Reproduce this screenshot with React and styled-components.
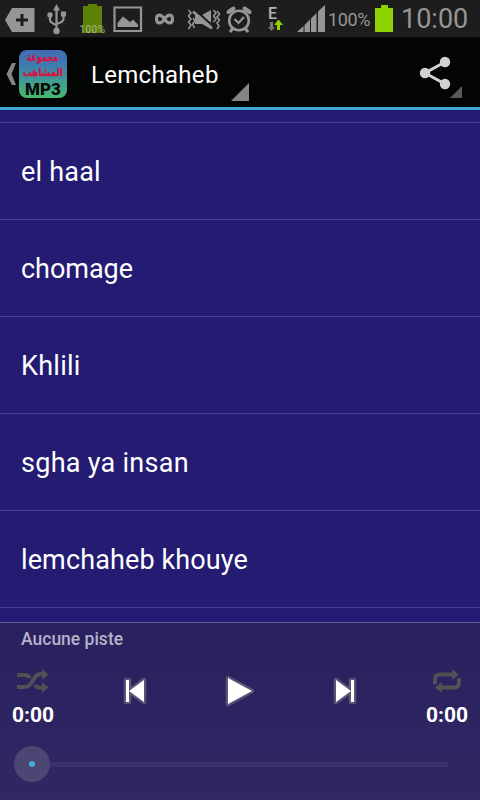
import React from "react";
import styled, { createGlobalStyle } from "styled-components";

const GlobalStyle = createGlobalStyle`
  * { box-sizing: border-box; }
  html, body { margin: 0; padding: 0; background: #241b72; }
  body { font-family: Roboto, "Noto Sans", sans-serif; color: #fff; overflow: hidden; }
  svg { display: block; flex: none; }
`;

const Screen = styled.div`
  width: 480px;
  height: 800px;
  display: flex;
  flex-direction: column;
  overflow: hidden;
  background: #241b72;
`;

const StatusBar = styled.header`
  height: 38px;
  flex: none;
  display: flex;
  align-items: stretch;
  padding-left: 4px;
  background: #1d1d1d;
  border-bottom: 1px solid #0c0c0c;
`;

const StatusGlyph = styled.svg`
  width: ${(p) => p.$w}px;
  height: 37px;
  margin-right: ${(p) => p.$gap || 0}px;
  fill: #969696;
`;

const StatusText = styled.span`
  width: ${(p) => p.$w}px;
  margin-right: ${(p) => p.$gap || 0}px;
  font-size: ${(p) => p.$size}px;
  font-weight: 400;
  letter-spacing: ${(p) => p.$track || 0}px;
  line-height: ${(p) => p.$line}px;
  color: #969696;
  white-space: nowrap;
`;

const ActionBar = styled.nav`
  height: 72px;
  flex: none;
  display: flex;
  align-items: flex-start;
  padding: 12px 0 0 6px;
  background: #030504;
  border-bottom: 3px solid #3fa9d8;
`;

const BackArrow = styled.svg`
  width: 13px;
  height: 48px;
`;

const AppIcon = styled.div`
  width: 48px;
  height: 48px;
  border-radius: 8px;
  display: flex;
  flex-direction: column;
  align-items: center;
  background: linear-gradient(#426bb4 0%, #3f79b0 30%, #419b92 65%, #46b970 100%);
`;

const IconScript = styled.span`
  height: 15px;
  font: 700 11px/15px "DejaVu Sans", sans-serif;
  color: #d5123e;
  -webkit-text-stroke: 0.3px #d5123e;
  white-space: nowrap;
  transform: scaleX(${(p) => p.$sx});
`;

const IconLatin = styled.span`
  font: 900 17px/18px Roboto, sans-serif;
  color: #060b06;
`;

const Title = styled.h1`
  width: 140px;
  margin: 0 0 0 24px;
  font-size: 24px;
  font-weight: 400;
  line-height: 50px;
  letter-spacing: 0.3px;
`;

const Corner = styled.svg`
  width: ${(p) => p.$size}px;
  height: ${(p) => p.$size}px;
  margin-top: ${(p) => p.$top}px;
  fill: ${(p) => p.$color};
`;

const ShareIcon = styled.svg`
  width: 31px;
  height: 48px;
  margin-left: 170px;
`;

const TrackList = styled.ul`
  flex: 1;
  min-height: 0;
  margin: 0;
  padding: 12px 0 0;
  overflow: hidden;
  list-style: none;
`;

const Track = styled.li`
  height: 97px;
  padding-left: 21px;
  border-top: 1px solid #453c8b;
  font-size: 27px;
  line-height: 98px;
`;

const TrackName = styled.span`
  letter-spacing: ${(p) => p.$track}px;
`;

const Player = styled.footer`
  height: 178px;
  flex: none;
  border-top: 1px solid #67619c;
  background: linear-gradient(#29205f, #302863);
`;

const NowPlaying = styled.div`
  height: 32px;
  padding-left: 21px;
  font-size: 17.5px;
  font-weight: 500;
  line-height: 32px;
  color: #b5b2c9;
`;

const Controls = styled.div`
  height: 84px;
  display: flex;
  justify-content: space-between;
  padding: 0 12px;
`;

const ModeColumn = styled.div`
  width: 42px;
  display: flex;
  flex-direction: column;
  align-items: center;
  padding-top: 12px;
`;

const ModeIcon = styled.svg`
  width: 34px;
  height: 28px;
  fill: none;
  stroke: #545052;
  stroke-width: 4;
`;

const Time = styled.span`
  margin-top: 7px;
  font-size: 21px;
  font-weight: 700;
  line-height: 26px;
`;

const Transport = styled.div`
  display: flex;
  align-items: flex-start;
  gap: 71px;
  padding-top: 18px;
`;

const TransportIcon = styled.svg`
  width: 34px;
  height: 36px;
  fill: #fff;
  stroke: #5a5478;
  stroke-width: 4.5;
  stroke-linejoin: round;
  paint-order: stroke;
`;

const Seek = styled.div`
  height: 50px;
  display: flex;
  align-items: center;
  padding: 0 32px 0 14px;
`;

const Thumb = styled.div`
  width: 36px;
  height: 36px;
  flex: none;
  display: grid;
  place-items: center;
  border-radius: 50%;
  background: #4d4673;
`;

const ThumbDot = styled.div`
  width: 6px;
  height: 6px;
  border-radius: 50%;
  background: #42ace0;
`;

const Rail = styled.div`
  flex: 1;
  height: 5px;
  background: #3b336e;
`;

const tracks = [
  ["el haal", 0.2],
  ["chomage", -0.05],
  ["Khlili", 0.25],
  ["sgha ya insan", 0.27],
  ["lemchaheb khouye", 0.12],
  ["", 0],
];

function StatusIcons() {
  return (
    <StatusBar>
      <StatusGlyph $w={31} $gap={11} viewBox="4 0 31 37">
        <path d="M5 20 12 8H34.500V32H12Z" />
        <path d="M16 20H28M22 14V26" stroke="#1d1d1d" strokeWidth="3" />
      </StatusGlyph>
      <StatusGlyph $w={22} $gap={11} viewBox="46 0 22 37">
        <path d="M56.500 4 60 10.500H53Z" />
        <circle cx="56.500" cy="31" r="3.200" />
        <circle cx="50" cy="15" r="2.700" />
        <path d="M61 11.500h5v5h-5z" />
        <path d="M56.500 8V31M50 15V19.500Q50 23 56.500 25M63.500 14V19Q63.500 22 56.500 24" fill="none" stroke="#969696" strokeWidth="2.200" />
      </StatusGlyph>
      <StatusGlyph $w={29} $gap={5} viewBox="79 0 29 37">
        <path d="M83 6H88V4H97V6H102V33H83Z" fill="#5b8204" />
        <text x="79.500" y="32.500" fontSize="10" fontFamily="Roboto" textLength="25.500" fill="#a7b590">100%</text>
      </StatusGlyph>
      <StatusGlyph $w={30} $gap={11} viewBox="113 0 30 37">
        <path d="M114.500 7.500H141V31H114.500Z" fill="none" stroke="#969696" strokeWidth="2.200" />
        <path d="M117.500 27V23L123 16.500 130 22 133 19.500 138 24.500V27Z" />
      </StatusGlyph>
      <StatusGlyph $w={22} $gap={10} viewBox="154 0 22 37">
        <path d="M164.500 19C161 13.500 156.500 14 156.500 19S161 24.500 164.500 19S172.500 14 172.500 19S168 24.500 164.500 19Z" fill="none" stroke="#969696" strokeWidth="3.200" />
      </StatusGlyph>
      <StatusGlyph $w={35} $gap={4} viewBox="186 0 35 37">
        <path d="M195 15H202L211 10V29L202 24H195Z" />
        <path d="M194.500 9.500 213.500 26.500" stroke="#1d1d1d" strokeWidth="2.200" />
        <path d="M193 11.500 212 28.500" stroke="#969696" strokeWidth="2.600" />
        <path d="M188.500 10 191 13 188.500 16 191 19 188.500 22 191 25 188.500 29M193 18 195 21 192.500 24 194.500 28M213.500 10 216 13 213.500 16 216 19 213.500 22M217 11 219.500 14 217 17 219.500 20 217 23 219 26 217 29" fill="none" stroke="#969696" strokeWidth="1.600" />
      </StatusGlyph>
      <StatusGlyph $w={28} $gap={14} viewBox="225 0 28 37">
        <g fill="none" stroke="#969696">
          <circle cx="239" cy="20.500" r="9.800" strokeWidth="2.600" />
          <path d="M234.500 19 238.500 23 244 17" strokeWidth="2.200" />
          <path d="M228.500 12 233.500 8.500M244.500 8.500 249.500 12" strokeWidth="4" strokeLinecap="round" />
          <path d="M233 28 230 32M245 28 248 32" strokeWidth="3" />
        </g>
      </StatusGlyph>
      <StatusGlyph $w={17} $gap={12} viewBox="267 0 17 37">
        <text x="268" y="18.500" fontSize="16" fontWeight="500" fontFamily="Roboto" fill="#b2b2b2">E</text>
        <path d="M270 22H273V27H275L271.500 31 268 27H270Z" fill="#777" />
        <path d="M277 30V25H274L278.500 19.500 283 25H280V30Z" fill="#94d000" />
      </StatusGlyph>
      <StatusGlyph $w={30} $gap={2} viewBox="296 0 30 37">
        <path d="M297 32 303.500 26V32ZM304.500 25 310 19.500V32H304.500ZM311 18.500 316.500 13V32H311ZM318 11.500 325 5V32H318Z" />
      </StatusGlyph>
      <StatusText $w={43} $gap={4} $size={18} $track={-0.35} $line={40}>100%</StatusText>
      <StatusGlyph $w={19} $gap={7} viewBox="375 0 19 37">
        <path d="M375 8H381V5H388V8H393V32H375Z" fill="#91d300" />
      </StatusGlyph>
      <StatusText $w={70} $size={27} $line={38}>10:00</StatusText>
    </StatusBar>
  );
}

export default function App() {
  return (
    <>
      <GlobalStyle />
      <Screen>
        <StatusIcons />
        <ActionBar>
          <BackArrow viewBox="0 0 13 48">
            <path d="M6 13H10L5.500 24 10 35H6L0.500 24Z" fill="#858585" />
          </BackArrow>
          <AppIcon>
            <IconScript $sx={0.72}>مجموعة</IconScript>
            <IconScript $sx={0.8}>المشاهب</IconScript>
            <IconLatin>MP3</IconLatin>
          </AppIcon>
          <Title>Lemchaheb</Title>
          <Corner $size={18} $top={33} $color="#858585" viewBox="0 0 18 18">
            <path d="M18 0V18H0Z" />
          </Corner>
          <ShareIcon viewBox="419 50 31 48" overflow="visible">
            <path d="M445 62 425 73 445 84" fill="none" stroke="#d2d2d2" strokeWidth="3" />
            <g fill="#d2d2d2">
              <circle cx="445" cy="62" r="5.200" />
              <circle cx="425" cy="73" r="5.200" />
              <circle cx="445" cy="84" r="5.200" />
            </g>
          </ShareIcon>
          <Corner $size={12} $top={36} $color="#5a5a5a" viewBox="0 0 12 12">
            <path d="M12 0V12H0Z" />
          </Corner>
        </ActionBar>
        <TrackList>
          {tracks.map(([name, track], i) => (
            <Track key={i}>
              <TrackName $track={track}>{name}</TrackName>
            </Track>
          ))}
        </TrackList>
        <Player>
          <NowPlaying>Aucune piste</NowPlaying>
          <Controls>
            <ModeColumn>
              <ModeIcon viewBox="16 667 34 28">
                <path d="M17 675H25Q28 675 30 678M17 687H24C34 687 32 674 41 674H43M35 685Q37 688 43 688" />
                <path d="M42 669 48.500 674.500 42 680ZM42 682 48.500 687.500 42 693Z" fill="#545052" stroke="none" />
              </ModeIcon>
              <Time>0:00</Time>
            </ModeColumn>
            <Transport>
              <TransportIcon viewBox="118 673 34 36">
                <path d="M126 680H129V702H126ZM144 680V702L129 691Z" />
              </TransportIcon>
              <TransportIcon viewBox="223 673 34 36">
                <path d="M228 678V704L252 691Z" />
              </TransportIcon>
              <TransportIcon viewBox="328 673 34 36">
                <path d="M336 680V702L351 691ZM351 680H354V702H351Z" />
              </TransportIcon>
            </Transport>
            <ModeColumn>
              <ModeIcon viewBox="430 667 34 28">
                <path d="M435 684V679.500Q435 674.500 440 674.500H453M459 678V682.500Q459 687.500 454 687.500H441" />
                <path d="M452 669 459 674.500 452 680ZM442 682 435 687.500 442 693Z" fill="#545052" stroke="none" />
              </ModeIcon>
              <Time>0:00</Time>
            </ModeColumn>
          </Controls>
          <Seek>
            <Thumb><ThumbDot /></Thumb>
            <Rail />
          </Seek>
        </Player>
      </Screen>
    </>
  );
}
